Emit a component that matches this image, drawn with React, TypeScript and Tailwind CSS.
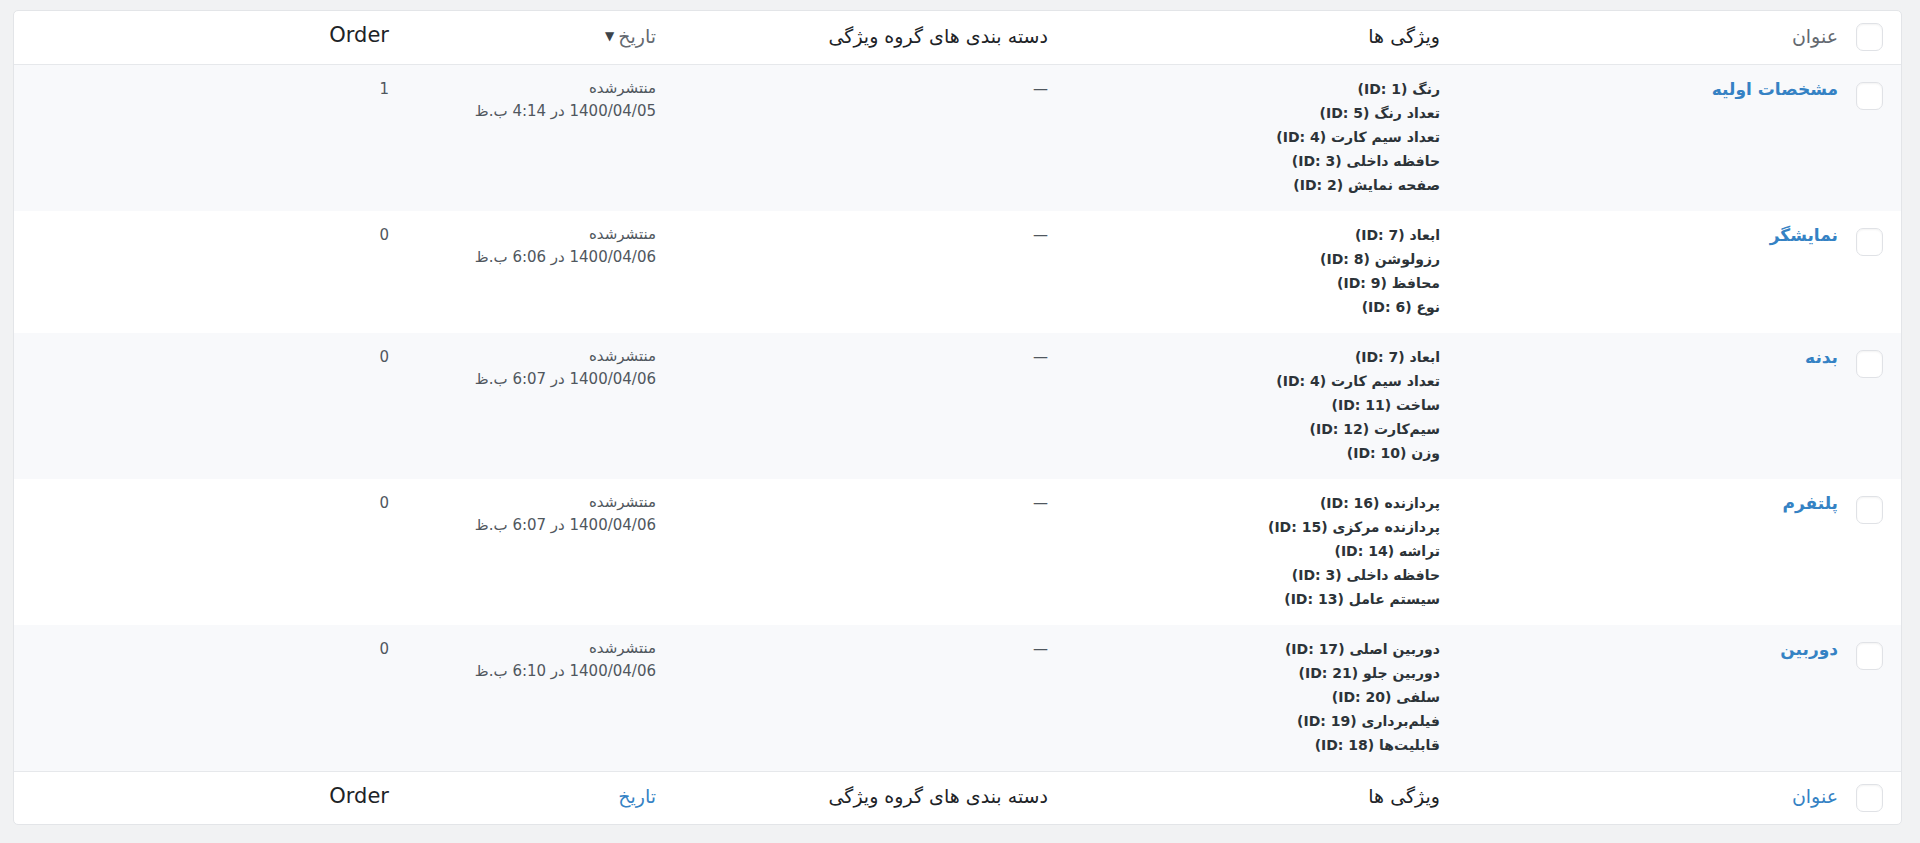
import React from "react";

type Group = {
  id: number;
  title: string;
  features: string[];
  date: string;
  order: number;
  zebra: boolean;
};

const groups: Group[] = [
  {
    id: 1,
    title: "مشخصات اولیه",
    features: [
      "رنگ (ID: 1)",
      "تعداد رنگ (ID: 5)",
      "تعداد سیم کارت (ID: 4)",
      "حافظه داخلی (ID: 3)",
      "صفحه نمایش (ID: 2)",
    ],
    date: "1400/04/05 در 4:14 ب.ظ",
    order: 1,
    zebra: true,
  },
  {
    id: 2,
    title: "نمایشگر",
    features: ["ابعاد (ID: 7)", "رزولوشن (ID: 8)", "محافظ (ID: 9)", "نوع (ID: 6)"],
    date: "1400/04/06 در 6:06 ب.ظ",
    order: 0,
    zebra: false,
  },
  {
    id: 3,
    title: "بدنه",
    features: [
      "ابعاد (ID: 7)",
      "تعداد سیم کارت (ID: 4)",
      "ساخت (ID: 11)",
      "سیم‌کارت (ID: 12)",
      "وزن (ID: 10)",
    ],
    date: "1400/04/06 در 6:07 ب.ظ",
    order: 0,
    zebra: true,
  },
  {
    id: 4,
    title: "پلتفرم",
    features: [
      "پردازنده (ID: 16)",
      "پردازنده مرکزی (ID: 15)",
      "تراشه (ID: 14)",
      "حافظه داخلی (ID: 3)",
      "سیستم عامل (ID: 13)",
    ],
    date: "1400/04/06 در 6:07 ب.ظ",
    order: 0,
    zebra: false,
  },
  {
    id: 5,
    title: "دوربین",
    features: [
      "دوربین اصلی (ID: 17)",
      "دوربین جلو (ID: 21)",
      "سلفی (ID: 20)",
      "فیلم‌برداری (ID: 19)",
      "قابلیت‌ها (ID: 18)",
    ],
    date: "1400/04/06 در 6:10 ب.ظ",
    order: 0,
    zebra: true,
  },
];

function Check() {
  return (
    <span className="block w-[27px] h-[28px] rounded-[7px] border border-[#e0e2e6] bg-white shadow-[inset_0_1px_2px_rgba(0,0,0,0.05)]" />
  );
}

function HeadRow({ footer }: { footer?: boolean }) {
  const link = footer ? "text-[#3582c4]" : "text-[#646970]";
  return (
    <tr className={footer ? "border-t border-[#e6e8eb]" : "border-b border-[#e6e8eb]"}>
      <td className="pr-[18px] h-[53px] align-middle">
        <Check />
      </td>
      <th className={`pr-[10px] pb-[3px] text-right font-normal text-[19px] ${link}`}>عنوان</th>
      <th className="pr-[10px] pb-[3px] text-right font-normal text-[19px] text-[#1d2327]">ویژگی ها</th>
      <th className="pr-[10px] pb-[3px] text-right font-normal text-[19px] text-[#1d2327]">
        دسته بندی های گروه ویژگی
      </th>
      <th className={`pr-[10px] pb-[3px] text-right font-normal text-[19px] ${link}`}>
        <span className="inline-flex items-center gap-1">
          تاریخ
          {!footer && <span className="text-[12px] text-[#3c434a]">▼</span>}
        </span>
      </th>
      <th className="pr-[10px] pb-[3px] text-right font-normal text-[21px] text-[#1d2327]">Order</th>
    </tr>
  );
}

export default function App() {
  return (
    <div
      dir="rtl"
      className="min-h-screen bg-[#f1f2f3] pt-[10px] pl-[13px] pr-[18px] pb-4 font-['DejaVu_Sans','Noto_Sans',sans-serif]"
    >
      <div className="bg-white border border-[#e3e5e8] rounded-[5px] overflow-hidden">
        <table className="w-full table-fixed border-collapse">
          <colgroup>
            <col className="w-[53px]" />
            <col className="w-[398px]" />
            <col className="w-[392px]" />
            <col className="w-[392px]" />
            <col className="w-[267px]" />
            <col />
          </colgroup>
          <thead>
            <HeadRow />
          </thead>
          <tbody>
            {groups.map(g => (
              <tr key={g.id} className={g.zebra ? "bg-[#f8f9fb]" : "bg-white"}>
                <td className="pr-[18px] pt-[17px] align-top">
                  <Check />
                </td>
                <td className="pr-[10px] pt-3 align-top">
                  <a className="text-[17px] leading-6 font-semibold text-[#3582c4]">{g.title}</a>
                </td>
                <td className="pr-[10px] pt-3 pb-[14px] align-top">
                  {g.features.map(f => (
                    <div key={f} className="text-[14px] leading-6 font-bold text-[#2c3338]">
                      {f}
                    </div>
                  ))}
                </td>
                <td className="pr-[10px] pt-3 align-top text-[15px] leading-6 text-[#50575e]">—</td>
                <td className="pr-[10px] pt-3 align-top text-[15px] leading-[23px] text-[#50575e]">
                  <div>منتشرشده</div>
                  <div>{g.date}</div>
                </td>
                <td className="pr-[10px] pt-3 align-top text-[15px] leading-6 text-[#50575e]">
                  {g.order}
                </td>
              </tr>
            ))}
          </tbody>
          <tfoot>
            <HeadRow footer />
          </tfoot>
        </table>
      </div>
    </div>
  );
}
